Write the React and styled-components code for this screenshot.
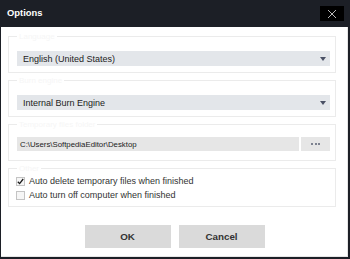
import React from 'react'
import styled, { createGlobalStyle } from 'styled-components'

const GlobalStyle = createGlobalStyle`
  html, body {
    margin: 0;
    padding: 0;
    background: #fff;
  }
  * {
    box-sizing: border-box;
  }
`

const Window = styled.div`
  width: 350px;
  height: 259px;
  display: flex;
  flex-direction: column;
  font-family: 'Liberation Sans', Arial, sans-serif;
  background: #fff;
`

const TitleBar = styled.div`
  height: 27px;
  flex: none;
  background: #1c1f26;
  display: flex;
  align-items: center;
  justify-content: space-between;
  padding: 0 6px 2px 7px;
`

const Title = styled.div`
  color: #fff;
  font-weight: bold;
  font-size: 9.4px;
`

const CloseButton = styled.div`
  width: 24px;
  height: 15px;
  background: #000;
  display: flex;
  align-items: center;
  justify-content: center;
  margin-top: 2px;
`

const Body = styled.div`
  flex: 1;
  display: flex;
  flex-direction: column;
  gap: 7px;
  padding: 9px 12px 0 7px;
  border-left: 1px solid #1c1f26;
  border-right: 2px solid #1c1f26;
  border-bottom: 2px solid #1c1f26;
  box-shadow: inset -1px -1px 0 #e6e6e6;
`

const Group = styled.div`
  position: relative;
  height: ${p => p.h || 37}px;
  border: 1px solid #ebebeb;
  padding: ${p => p.top || 14}px 5px 0 8px;
  display: flex;
  flex-direction: column;
  gap: ${p => p.gap || 0}px;
`

const Legend = styled.span`
  position: absolute;
  top: -5px;
  left: 8px;
  padding: 0 2px;
  background: #fff;
  color: #f6f6f6;
  font-size: 8px;
  line-height: 9px;
`

const Select = styled.div`
  height: 15px;
  background: #e3e6ea;
  display: flex;
  align-items: center;
  justify-content: space-between;
  padding: 0 4px 0 6px;
  font-size: 9px;
  color: #222;
`

const Arrow = styled.span`
  width: 0;
  height: 0;
  border-left: 3.5px solid transparent;
  border-right: 3.5px solid transparent;
  border-top: 4px solid #4a5165;
`

const PathRow = styled.div`
  display: flex;
  gap: 2px;
  height: 14px;
`

const PathField = styled.div`
  flex: 1;
  background: #e6e6e6;
  display: flex;
  align-items: center;
  padding: 0 3px;
  font-size: 7.8px;
  color: #222;
`

const BrowseButton = styled.div`
  width: 29px;
  background: #e6e6e6;
  display: flex;
  align-items: center;
  justify-content: center;
  gap: 1.5px;
`

const Dot = styled.span`
  width: 2px;
  height: 2px;
  background: #7d8290;
`

const CheckRow = styled.label`
  display: flex;
  align-items: center;
  gap: 4px;
  height: 10px;
  font-size: 9px;
  color: #333;
  margin-left: -1px;
`

const Box = styled.span`
  width: 9px;
  height: 9px;
  border: 1px solid #c4c4c4;
  background: #f6f6f6;
  display: flex;
  align-items: center;
  justify-content: center;
`

const Buttons = styled.div`
  display: flex;
  justify-content: center;
  gap: 8px;
  margin-top: 11px;
  padding-left: 5px;
`

const Button = styled.div`
  width: 86px;
  height: 23px;
  background: #dadada;
  display: flex;
  align-items: center;
  justify-content: center;
  font-weight: bold;
  font-size: 9.8px;
  color: #333;
`

const Check = ({ checked, children }) => (
  <CheckRow>
    <Box>
      {checked && (
        <svg width="7" height="7" viewBox="0 0 7 7">
          <path d="M0.8 3.8 L2.6 5.6 L6.2 1" fill="none" stroke="#1a1a1a" strokeWidth="1.3" />
        </svg>
      )}
    </Box>
    {children}
  </CheckRow>
)

export default function App() {
  return (
    <Window>
      <GlobalStyle />
      <TitleBar>
        <Title>Options</Title>
        <CloseButton>
          <svg width="10" height="10" viewBox="0 0 10 10">
            <path d="M1 1 L9 9 M9 1 L1 9" stroke="#b8b8b8" strokeWidth="1" />
          </svg>
        </CloseButton>
      </TitleBar>
      <Body>
        <Group>
          <Legend>Language</Legend>
          <Select>
            English (United States)
            <Arrow />
          </Select>
        </Group>
        <Group>
          <Legend>Burn engine</Legend>
          <Select>
            Internal Burn Engine
            <Arrow />
          </Select>
        </Group>
        <Group top={12}>
          <Legend>Temporary files folder</Legend>
          <PathRow>
            <PathField>C:\Users\SoftpediaEditor\Desktop</PathField>
            <BrowseButton>
              <Dot />
              <Dot />
              <Dot />
            </BrowseButton>
          </PathRow>
        </Group>
        <Group h={39} top={7} gap={4}>
          <Legend>Other</Legend>
          <Check checked>Auto delete temporary files when finished</Check>
          <Check>Auto turn off computer when finished</Check>
        </Group>
        <Buttons>
          <Button>OK</Button>
          <Button>Cancel</Button>
        </Buttons>
      </Body>
    </Window>
  )
}
